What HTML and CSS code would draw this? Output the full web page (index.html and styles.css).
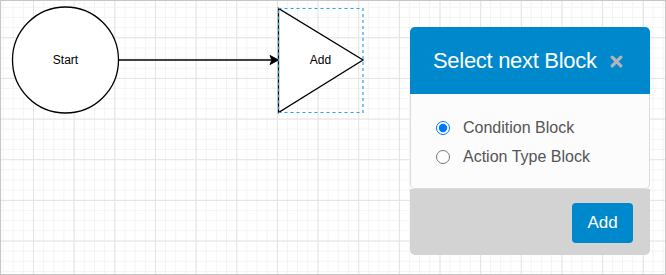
FILE: index.html
```html
<!DOCTYPE html>
<html>
<head>
<meta charset="utf-8">
<link rel="stylesheet" href="styles.css">
</head>
<body>
<div class="canvas">
  <svg class="diagram" width="664" height="273" viewBox="1 1 664 273" xmlns="http://www.w3.org/2000/svg">
    <circle cx="65.5" cy="60" r="53" fill="#fff" stroke="#000" stroke-width="1.3"/>
    <text x="65.5" y="64" class="node-label" text-anchor="middle">Start</text>
    <line x1="118.5" y1="60" x2="272" y2="60" stroke="#000" stroke-width="1.3"/>
    <path d="M278.5 60 L270 55.5 L272 60 L270 64.5 Z" fill="#000" stroke="#000" stroke-width="1"/>
    <path d="M278.5 8.5 L278.5 112.5 L363 60 Z" fill="#fff" stroke="#000" stroke-width="1.3" stroke-linejoin="miter"/>
    <text x="320.5" y="64" class="node-label" text-anchor="middle">Add</text>
    <rect x="278.5" y="8.5" width="84.5" height="104" fill="none" stroke="#29a3e6" stroke-width="1.2" stroke-dasharray="3 3"/>
  </svg>

  <div class="dialog">
    <div class="dialog-header">
      <span class="dialog-title">Select next Block</span>
      <svg class="close" width="13" height="13" viewBox="0 0 13 13" xmlns="http://www.w3.org/2000/svg">
        <path d="M2.2 2.2 L10.8 10.8 M10.8 2.2 L2.2 10.8" stroke="#b4b4b4" stroke-width="3.2" stroke-linecap="round"/>
      </svg>
    </div>
    <div class="dialog-body">
      <label class="option"><input type="radio" name="block" checked><span>Condition Block</span></label>
      <label class="option"><input type="radio" name="block"><span>Action Type Block</span></label>
    </div>
    <div class="dialog-footer">
      <button class="btn-add">Add</button>
    </div>
  </div>
</div>
</body>
</html>
```

FILE: styles.css
```css
html, body {
  margin: 0;
  padding: 0;
  background: #fff;
}

.canvas {
  position: relative;
  width: 666px;
  height: 275px;
  box-sizing: border-box;
  border: 1px solid #c6c6c6;
  overflow: hidden;
  background-color: #fff;
  background-image:
    linear-gradient(to right, #e4e4e4 1px, transparent 1px),
    linear-gradient(to bottom, #e4e4e4 1px, transparent 1px),
    linear-gradient(to right, #f3f3f3 1px, transparent 1px),
    linear-gradient(to bottom, #f3f3f3 1px, transparent 1px);
  background-size:
    40.67px 40.67px,
    40.67px 40.67px,
    10.17px 10.17px,
    10.17px 10.17px;
  background-position:
    32px 36.3px,
    32px 36.3px,
    1.6px 5.8px,
    1.6px 5.8px;
}

.diagram {
  position: absolute;
  left: 0;
  top: 0;
}

.node-label {
  font-family: "Liberation Sans", Arial, sans-serif;
  font-size: 12px;
  fill: #000;
}

.dialog {
  position: absolute;
  left: 409px;
  top: 26px;
  width: 240px;
  font-family: "Liberation Sans", Arial, sans-serif;
}

.dialog-header {
  height: 67px;
  box-sizing: border-box;
  background: #0088cc;
  border-radius: 5px 5px 0 0;
  display: flex;
  align-items: center;
  padding-left: 23px;
  padding-top: 1px;
}

.dialog-title {
  color: #fff;
  font-size: 22px;
  letter-spacing: -0.3px;
}

.close {
  margin-left: 13px;
  margin-top: 1px;
}

.dialog-body {
  height: 95px;
  box-sizing: border-box;
  background: #fcfcfc;
  border: 1px solid #dcdcdc;
  border-top: none;
  border-radius: 0 0 5px 5px;
  padding: 19px 0 0 25px;
  display: flex;
  flex-direction: column;
}

.option {
  display: flex;
  align-items: center;
  height: 29px;
  gap: 13px;
  color: #555;
  font-size: 16px;
}

.option input {
  margin: 0;
  width: 14px;
  height: 14px;
}

.dialog-footer {
  height: 66px;
  box-sizing: border-box;
  background: #d3d3d3;
  border-radius: 0 0 5px 5px;
  display: flex;
  justify-content: flex-end;
  align-items: flex-start;
  padding: 14px 17px 0 0;
}

.btn-add {
  width: 61px;
  height: 40px;
  border: none;
  border-radius: 4px;
  background: #0088cc;
  color: #fff;
  font-family: "Liberation Sans", Arial, sans-serif;
  font-size: 17px;
  padding: 0;
}
```
